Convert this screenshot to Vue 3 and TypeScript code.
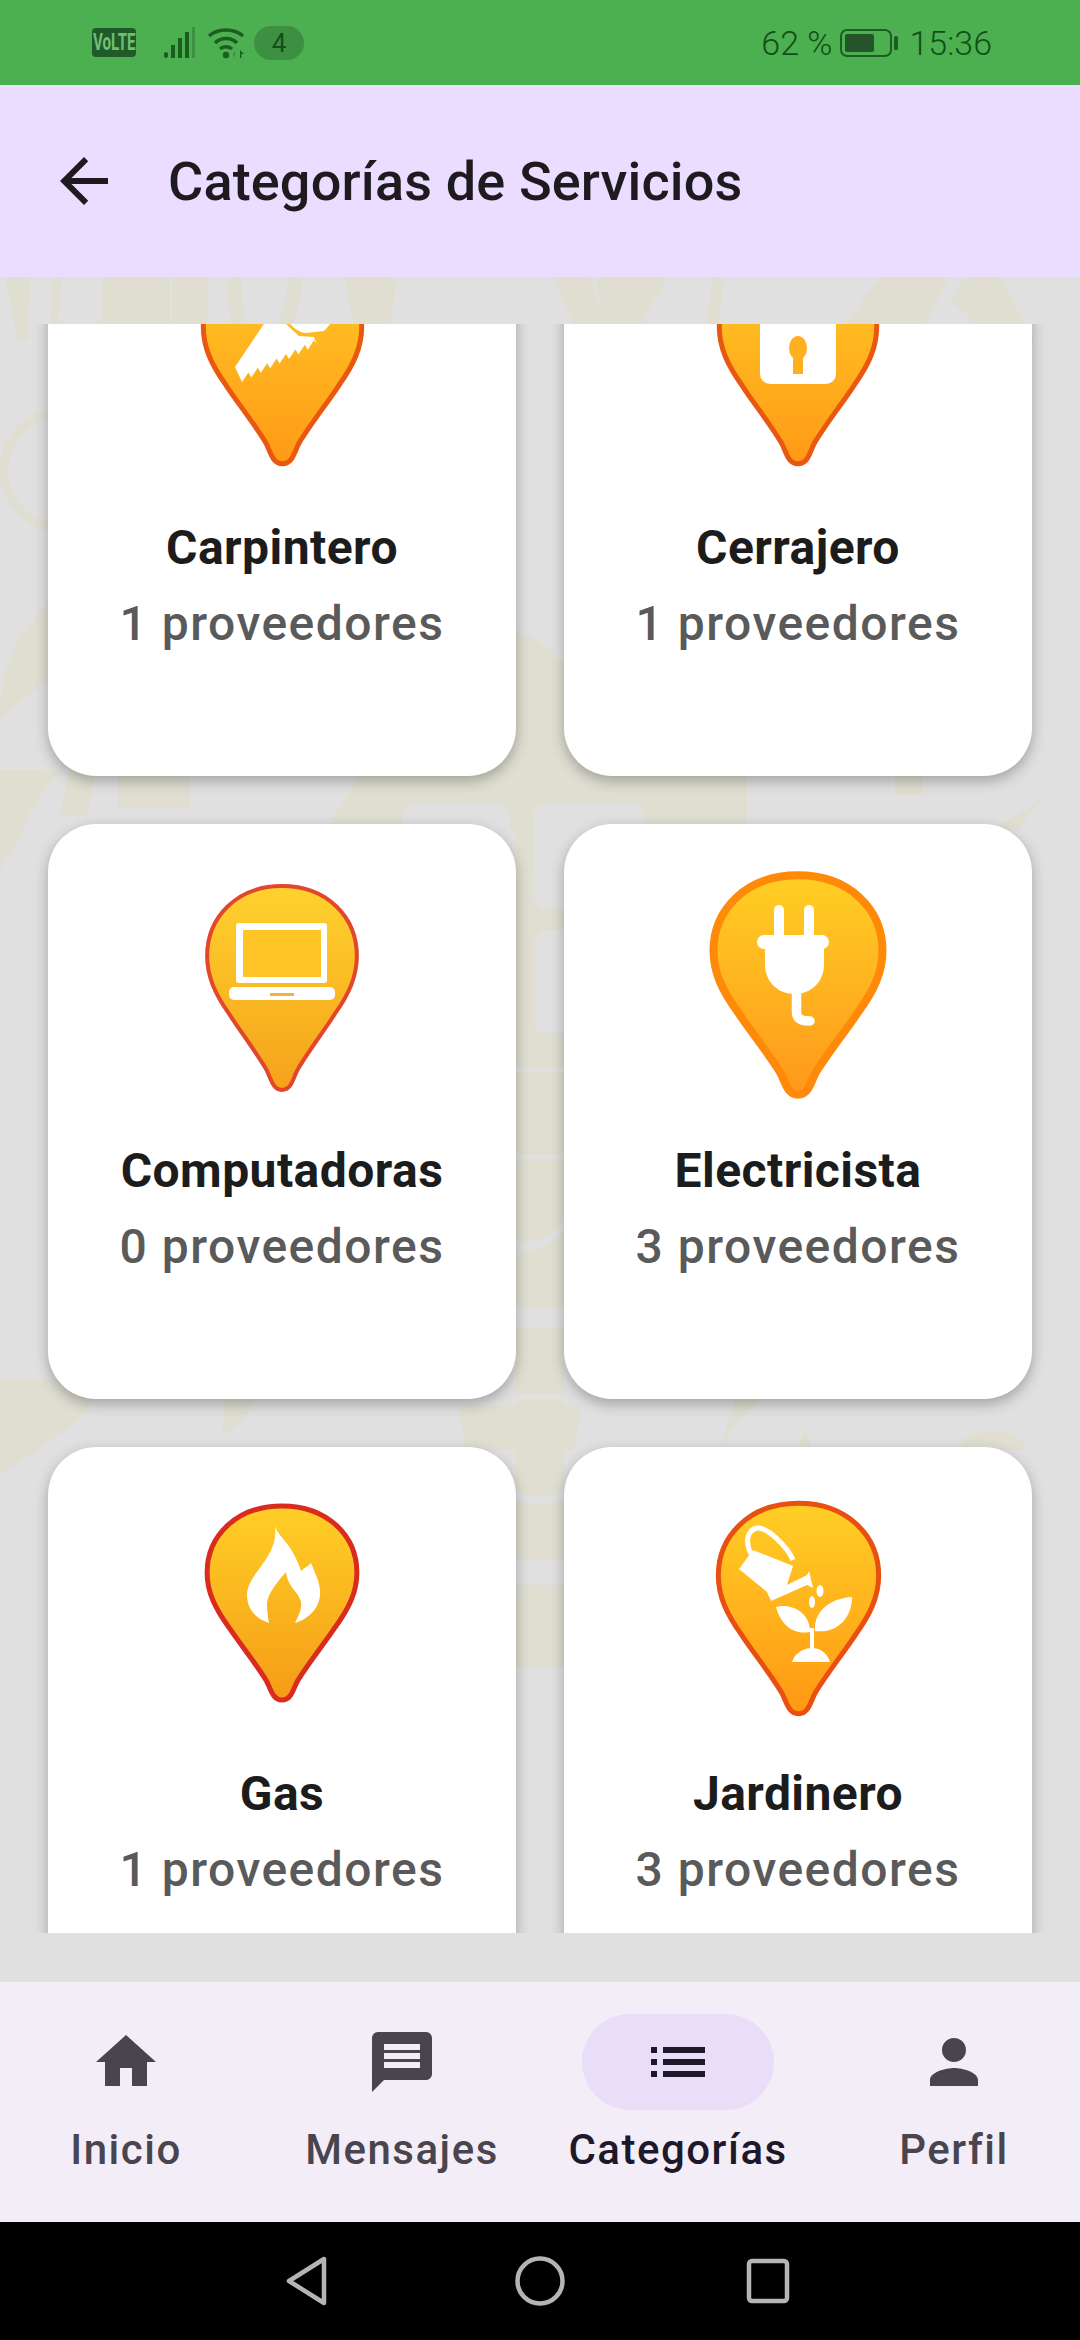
<script setup lang="ts">
interface Pin {
  name: string
  count: number
  w: number
  h: number
  top: number
  stroke: number
  color: string
  from: string
  to: string
  icon: string
}

const pins: Pin[] = [
  { name: 'Carpintero', count: 1, w: 165, h: 215, top: 3, stroke: 5, color: '#E8590F', from: '#FFCB26', to: '#FF9A17', icon: 'saw' },
  { name: 'Cerrajero', count: 1, w: 164, h: 215, top: 3, stroke: 5, color: '#E8590F', from: '#FFCB26', to: '#FF9A17', icon: 'lock' },
  { name: 'Computadoras', count: 0, w: 156, h: 210, top: 11, stroke: 4, color: '#E2472C', from: '#FFD22E', to: '#F5A21A', icon: 'laptop' },
  { name: 'Electricista', count: 3, w: 176, h: 226, top: 0, stroke: 8, color: '#FF8A0A', from: '#FFCF24', to: '#FF981C', icon: 'plug' },
  { name: 'Gas', count: 1, w: 156, h: 200, top: 8, stroke: 5, color: '#D92C1F', from: '#FFCF26', to: '#F59C17', icon: 'flame' },
  { name: 'Jardinero', count: 3, w: 167, h: 217, top: 5, stroke: 5, color: '#E84F10', from: '#FFCF26', to: '#FF9813', icon: 'garden' }
]

const pinPath =
  'M50 2C79 2 98 22 98 47C98 60 93 71 84 84C77 95 67 108 60 120C57 126 56 133 50 133C44 133 43 126 40 120C33 108 23 95 16 84C7 71 2 60 2 47C2 22 21 2 50 2Z'

const tabs = [
  { label: 'Inicio', d: 'M10 20v-6h4v6h5v-8h3L12 3 2 12h3v8z', active: false },
  { label: 'Mensajes', d: 'M20 2H4c-1.1 0-1.99.9-1.99 2L2 22l4-4h14c1.1 0 2-.9 2-2V4c0-1.1-.9-2-2-2zm-2 12H6v-2h12v2zm0-3H6V9h12v2zm0-3H6V6h12v2z', active: false },
  { label: 'Categorías', d: 'M3 13h2v-2H3v2zm0 4h2v-2H3v2zm0-8h2V7H3v2zm4 4h14v-2H7v2zm0 4h14v-2H7v2zM7 7v2h14V7H7z', active: true },
  { label: 'Perfil', d: 'M12 12c2.21 0 4-1.79 4-4s-1.79-4-4-4-4 1.79-4 4 1.79 4 4 4zm0 2c-2.67 0-8 1.34-8 4v2h16v-2c0-2.66-5.33-4-8-4z', active: false }
]
</script>

<template>
  <div class="screen">
    <header class="status">
      <div class="status-left">
        <span class="volte"><span class="volte-text">VoLTE</span></span>
        <svg class="signal" width="34" height="32" viewBox="0 0 34 32">
          <rect x="2" y="25" width="4" height="6" rx="2" fill="#1c5e22" />
          <rect x="9" y="18" width="4" height="13" fill="#1c5e22" />
          <rect x="16" y="11" width="4" height="20" fill="#1c5e22" />
          <rect x="23" y="5" width="4" height="26" fill="#1c5e22" />
          <rect x="30" y="0" width="3" height="31" fill="#3d8f41" />
        </svg>
        <svg class="wifi" width="38" height="32" viewBox="0 0 38 32">
          <path d="M2 9C11 1 27 1 36 9" fill="none" stroke="#1c5e22" stroke-width="3.6" />
          <path d="M8 16C14 10 24 10 30 16" fill="none" stroke="#1c5e22" stroke-width="3.6" />
          <path d="M13 22C16 19 22 19 25 22" fill="none" stroke="#1c5e22" stroke-width="3.4" />
          <circle cx="19" cy="28" r="3.2" fill="#1c5e22" />
          <path d="M33 23l4 4h-2.6v4H33z" fill="#1c5e22" />
          <path d="M28 23v8l-2-3z" fill="#3d8f41" />
        </svg>
        <span class="badge">4</span>
      </div>
      <div class="status-right">
        <span class="pct">62 %</span>
        <svg width="58" height="28" viewBox="0 0 58 28">
          <rect x="1" y="1" width="50" height="26" rx="6" fill="none" stroke="#1c5e22" stroke-width="2" />
          <rect x="5" y="5" width="29" height="18" rx="2" fill="#265428" />
          <rect x="54" y="7" width="4" height="14" rx="1.5" fill="#1c5e22" />
        </svg>
        <span>15:36</span>
      </div>
    </header>

    <div class="appbar">
      <svg class="back" width="72" height="72" viewBox="0 0 24 24">
        <path d="M20 11H7.83l5.59-5.59L12 4l-8 8 8 8 1.41-1.41L7.83 13H20v-2z" fill="#1D1B20" />
      </svg>
      <h1 class="title">Categorías de Servicios</h1>
    </div>

    <main class="body">
      <svg class="watermark" width="1080" height="1705" viewBox="0 277 1080 1705" aria-hidden="true">
        <g fill="#dfded1">
          <path d="M5 277H30L28 340H18Z" />
          <path d="M52 277H62L56 345H50Z" />
          <rect x="102" y="277" width="68" height="62" />
          <rect x="172" y="277" width="36" height="62" />
          <rect x="102" y="356" width="106" height="40" />
          <path d="M234 277C234 320 244 350 258 350C276 350 292 320 296 277" fill="none" stroke="#dfded1" stroke-width="14" />
          <path d="M345 277H396C394 320 386 345 372 345C358 345 350 320 345 277Z" />
          <path d="M553 277H590L612 340H580Z" />
          <path d="M595 277H668L628 345H610Z" />
          <path d="M712 277H724L716 345H705Z" />
          <path d="M880 277H930L830 345Z" />
          <path d="M860 324L915 277H950L925 324Z" />
          <path d="M965 277H1000L1035 345H1000L950 300Z" />
          <circle cx="62" cy="470" r="58" fill="none" stroke="#dfded1" stroke-width="9" />
          <path d="M48 603C22 630 0 660 0 718L48 680Z" />
          <path d="M516 630C535 638 552 648 564 668L747 770V830H324L365 770Z" />
          <rect x="516" y="660" width="48" height="1008" />
          <path d="M0 770H62C40 790 28 815 18 840L0 870Z" />
          <path d="M70 770H95L88 815H60Z" />
          <rect x="117" y="770" width="73" height="38" />
          <rect x="895" y="770" width="28" height="25" />
          <path d="M1040 800L992 830H1018Z" />
          <path d="M0 1380H100C90 1420 60 1430 38 1450L0 1475Z" />
          <path d="M225 1400H255C246 1420 232 1430 222 1436Z" />
          <path d="M458 1405H582L574 1450H466Z" />
          <path d="M735 1400H760C745 1415 730 1430 720 1450Z" />
          <path d="M805 1425L812 1450H798Z" />
          <path d="M960 1450C960 1425 1025 1425 1025 1450Z" />
        </g>
        <g fill="#e0e0e0">
          <rect x="403" y="803" width="107" height="100" rx="12" />
          <rect x="534" y="803" width="110" height="106" rx="12" />
          <rect x="535" y="930" width="40" height="103" rx="10" />
          <rect x="516" y="1068" width="48" height="4" />
          <rect x="516" y="1155" width="48" height="4" />
          <path d="M516 1240C535 1246 552 1236 564 1220V1230C552 1246 535 1254 516 1250Z" />
          <rect x="516" y="1307" width="48" height="20" />
          <rect x="516" y="1394" width="48" height="6" />
          <path d="M516 1490C535 1500 552 1496 564 1488V1498C552 1506 535 1508 516 1500Z" />
          <rect x="516" y="1560" width="48" height="25" />
        </g>
      </svg>

      <div class="scroller">
        <div class="grid">
          <article v-for="p in pins" :key="p.name" class="card">
            <div class="pin-box">
              <svg class="pin" :width="p.w" :height="p.h" :viewBox="`0 0 ${p.w} ${p.h}`" :style="{ marginTop: p.top + 'px' }">
                <defs>
                  <linearGradient :id="`g-${p.icon}`" x1="0" y1="0" x2="0" y2="1">
                    <stop offset="0" :stop-color="p.from" />
                    <stop offset="1" :stop-color="p.to" />
                  </linearGradient>
                </defs>
                <path
                  :d="pinPath"
                  :transform="`scale(${p.w / 100} ${p.h / 135})`"
                  :fill="`url(#g-${p.icon})`"
                  :stroke="p.color"
                  :stroke-width="p.stroke"
                  vector-effect="non-scaling-stroke"
                />
                <g v-if="p.icon === 'saw'" fill="#fff">
                  <path d="M72 60L35 115L42 130L48.400 120.400L51.400 125.400L57.800 115.800L60.800 120.800L67.200 111.200L70.200 116.200L76.600 106.600L79.600 111.600L86 102L89 107L95.400 97.400L98.400 102.400L104.800 92.800L107.800 97.800L114 88L117 93L114 85L99 84L86 72L80 60Z" />
                  <path d="M90 60V72C96 78 101 81 106 81L124 79L132 70V60Z" />
                </g>
                <g v-else-if="p.icon === 'lock'">
                  <rect x="44" y="60" width="76" height="72" rx="10" fill="#fff" />
                  <ellipse cx="82" cy="96" rx="9" ry="12" fill="#FFB01F" />
                  <rect x="77" y="104" width="10" height="18" fill="#FFB01F" />
                </g>
                <g v-else-if="p.icon === 'laptop'">
                  <rect x="32" y="40" width="91" height="60" rx="3" fill="#fff" />
                  <rect x="39" y="47" width="78" height="47" fill="#FFC426" />
                  <rect x="25" y="104" width="106" height="13" rx="5" fill="#fff" />
                  <rect x="66" y="110" width="24" height="3" fill="#F2B33A" />
                </g>
                <g v-else-if="p.icon === 'plug'" fill="#fff">
                  <rect x="64" y="33" width="10" height="36" rx="5" />
                  <rect x="94" y="33" width="10" height="36" rx="5" />
                  <rect x="47" y="63" width="72" height="14" rx="7" />
                  <path d="M55 72H114V92C114 110 101 122 84.500 122C68 122 55 110 55 92Z" />
                  <path d="M86.500 118V140C86.500 147 91 149 100 149" fill="none" stroke="#fff" stroke-width="9.500" stroke-linecap="round" />
                </g>
                <path
                  v-else-if="p.icon === 'flame'"
                  d="M71 23C74 34 88 40 97 68C99 66 103 64 107 60C112 72 117 82 116 92C115 106 104 116 91 120C96 110 99 103 96 96C93 88 84 84 82 69C74 78 64 90 63 100C63 108 64 114 65 120C52 116 43 106 43 92C43 70 75 55 71 23Z"
                  fill="#fff"
                />
                <g v-else-if="p.icon === 'garden'" fill="#fff">
                  <path d="M36 54C30 42 32 30 42 28C52 27 72 46 78 60" fill="none" stroke="#fff" stroke-width="5" />
                  <path d="M24 69L38 50L78 66L72 85L92 75L94 71L98 88L92 85L56 101L52 92Z" />
                  <ellipse cx="105" cy="91" rx="3.500" ry="6" />
                  <ellipse cx="97" cy="102" rx="3" ry="6" />
                  <path d="M61 107C76 103 95 112 95 132C78 135 66 125 61 107Z" />
                  <path d="M137 97C137 118 122 134 100 131C98 112 115 98 137 97Z" />
                  <path d="M95 128H99V150H95Z" />
                  <path d="M77 162C80 152 90 148 97 148C104 148 112 152 115 162Z" />
                </g>
              </svg>
            </div>
            <h2 class="name">{{ p.name }}</h2>
            <p class="count">{{ p.count }} proveedores</p>
          </article>
        </div>
      </div>
    </main>

    <nav class="tabs">
      <div v-for="t in tabs" :key="t.label" class="tab" :class="{ active: t.active }">
        <div class="pill">
          <svg width="72" height="72" viewBox="0 0 24 24"><path :d="t.d" fill="currentColor" /></svg>
        </div>
        <span class="tab-label">{{ t.label }}</span>
      </div>
    </nav>

    <footer class="sysnav">
      <svg width="46" height="52" viewBox="0 0 46 52">
        <path d="M39 4V48L4 26Z" fill="none" stroke="#b4b4b4" stroke-width="4.500" stroke-linejoin="round" />
      </svg>
      <svg class="sys-home" width="52" height="52" viewBox="0 0 52 52">
        <circle cx="26" cy="26" r="22.500" fill="none" stroke="#b4b4b4" stroke-width="4.500" />
      </svg>
      <svg width="46" height="48" viewBox="0 0 46 48">
        <rect x="4" y="4" width="38" height="40" rx="3" fill="none" stroke="#b4b4b4" stroke-width="4.500" />
      </svg>
    </footer>
  </div>
</template>

<style scoped>
.screen {
  width: 1080px;
  height: 2340px;
  display: flex;
  flex-direction: column;
  overflow: hidden;
  font-family: Roboto, "Noto Sans", sans-serif;
}
.status {
  height: 85px;
  flex: none;
  background: #4caf50;
  display: flex;
  align-items: center;
  justify-content: space-between;
  padding: 0 88px 0 92px;
  color: #124f19;
}
.status-left {
  display: flex;
  align-items: center;
}
.volte {
  width: 44px;
  height: 29px;
  border-radius: 4px;
  background: #1f5a28;
  display: flex;
  align-items: center;
  justify-content: center;
  overflow: hidden;
}
.volte-text {
  display: block;
  color: #6fbf73;
  font-size: 23px;
  font-weight: 700;
  line-height: 29px;
  white-space: nowrap;
  transform: scaleX(0.66);
}
.signal {
  margin-left: 26px;
}
.wifi {
  margin-left: 11px;
}
.badge {
  width: 50px;
  height: 34px;
  margin-left: 9px;
  border-radius: 17px;
  background: #3d8f41;
  font-size: 26px;
  line-height: 34px;
  text-align: center;
}
.status-right {
  display: flex;
  align-items: center;
  gap: 11px;
  font-size: 34px;
  font-weight: 300;
}
.pct {
  margin-right: -3px;
}
.appbar {
  height: 192px;
  flex: none;
  background: #eaddff;
  display: flex;
  align-items: center;
  padding-left: 48px;
}
.back {
  flex: none;
}
.title {
  margin: 0 0 0 48px;
  font-size: 54px;
  font-weight: 500;
  letter-spacing: 0.15px;
  color: #1d1b20;
}
.body {
  position: relative;
  flex: 1;
  min-height: 0;
  display: flex;
  flex-direction: column;
  background: #e0e0e0;
  padding: 47px 0 49px;
}
.watermark {
  position: absolute;
  left: 0;
  top: 0;
}
.scroller {
  position: relative;
  flex: 1;
  min-height: 0;
  overflow: hidden;
}
.grid {
  display: grid;
  grid-template-columns: 468px 468px;
  gap: 48px;
  padding: 0 48px;
  margin-top: -123px;
}
.card {
  height: 575px;
  box-sizing: border-box;
  padding-top: 48px;
  background: #fff;
  border-radius: 48px;
  box-shadow: 0 5px 14px rgba(0, 0, 0, 0.28);
  display: flex;
  flex-direction: column;
  align-items: center;
}
.pin-box {
  height: 240px;
  flex: none;
  display: flex;
  align-items: flex-start;
  justify-content: center;
}
.pin {
  display: block;
  overflow: visible;
}
.name {
  margin: 26px 0 0;
  font-size: 48px;
  font-weight: 700;
  line-height: 66px;
  letter-spacing: 0.45px;
  color: #1c1c1c;
}
.count {
  margin: 10px 0 0;
  font-size: 48px;
  line-height: 66px;
  font-weight: 500;
  letter-spacing: 1.5px;
  color: #5a5a5a;
}
.tabs {
  height: 240px;
  flex: none;
  box-sizing: border-box;
  background: #f3edf7;
  display: flex;
  justify-content: center;
  gap: 60px;
  padding-top: 32px;
}
.tab {
  width: 216px;
  display: flex;
  flex-direction: column;
  align-items: center;
  color: #49454f;
}
.pill {
  width: 192px;
  height: 96px;
  border-radius: 48px;
  display: flex;
  align-items: center;
  justify-content: center;
}
.tab.active {
  color: #1d192b;
}
.tab.active .pill {
  background: #e8def8;
}
.tab-label {
  margin-top: 12px;
  font-size: 42px;
  line-height: 56px;
  font-weight: 500;
  letter-spacing: 1.5px;
  white-space: nowrap;
}
.sysnav {
  height: 118px;
  flex: none;
  box-sizing: border-box;
  padding-right: 4px;
  background: #000;
  display: flex;
  align-items: center;
  justify-content: center;
}
.sys-home {
  margin: 0 179px 0 183px;
}
</style>

<style>
html,
body {
  margin: 0;
  background: #000;
}
</style>
